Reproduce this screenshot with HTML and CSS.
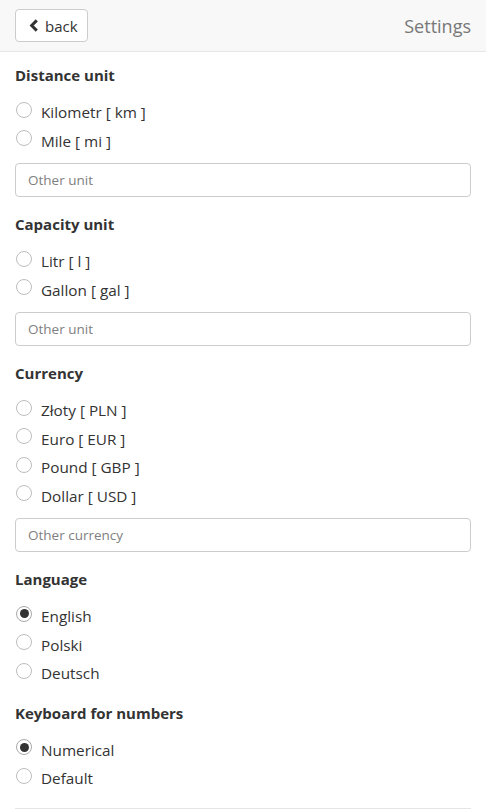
FILE: index.html
```html
<!DOCTYPE html>
<html>
<head>
<meta charset="utf-8">
<link rel="stylesheet" href="styles.css">
</head>
<body>
<header class="topbar">
  <button class="back-btn"><svg class="chev" viewBox="0 0 10 14" width="10" height="13"><path d="M8 1.5 L2.5 7 L8 12.5" fill="none" stroke="#333" stroke-width="3.2"/></svg><span>back</span></button>
  <div class="title">Settings</div>
</header>
<main class="content">
  <section class="group with-field">
    <h3 class="heading">Distance unit</h3>
    <div class="options">
      <label class="opt"><span class="radio"></span>Kilometr [ km ]</label>
      <label class="opt"><span class="radio"></span>Mile [ mi ]</label>
    </div>
    <div class="field">Other unit</div>
  </section>
  <section class="group with-field">
    <h3 class="heading">Capacity unit</h3>
    <div class="options">
      <label class="opt"><span class="radio"></span>Litr [ l ]</label>
      <label class="opt"><span class="radio"></span>Gallon [ gal ]</label>
    </div>
    <div class="field">Other unit</div>
  </section>
  <section class="group with-field">
    <h3 class="heading">Currency</h3>
    <div class="options">
      <label class="opt"><span class="radio"></span>Złoty [ PLN ]</label>
      <label class="opt"><span class="radio"></span>Euro [ EUR ]</label>
      <label class="opt"><span class="radio"></span>Pound [ GBP ]</label>
      <label class="opt"><span class="radio"></span>Dollar [ USD ]</label>
    </div>
    <div class="field">Other currency</div>
  </section>
  <section class="group">
    <h3 class="heading">Language</h3>
    <div class="options">
      <label class="opt"><span class="radio checked"></span>English</label>
      <label class="opt"><span class="radio"></span>Polski</label>
      <label class="opt"><span class="radio"></span>Deutsch</label>
    </div>
  </section>
  <section class="group">
    <h3 class="heading">Keyboard for numbers</h3>
    <div class="options">
      <label class="opt"><span class="radio checked"></span>Numerical</label>
      <label class="opt"><span class="radio"></span>Default</label>
    </div>
  </section>
  <hr class="rule">
</main>
</body>
</html>
```
FILE: styles.css
```css
html, body {
  margin: 0;
  padding: 0;
  background: #fff;
  font-family: "Open Sans", "Noto Sans", sans-serif;
  color: #333;
}
.topbar {
  height: 51px;
  background: #f8f8f8;
  border-bottom: 1px solid #e7e7e7;
  display: flex;
  align-items: center;
  justify-content: space-between;
  padding: 0 15px;
}
.back-btn {
  display: flex;
  align-items: center;
  gap: 6px;
  height: 33px;
  width: 73px;
  padding: 0 8px 0 13px;
  background: #fff;
  border: 1px solid #ccc;
  border-radius: 4px;
  font-family: inherit;
  font-size: 15px;
  color: #333;
  box-sizing: border-box;
}
.chev { display: block; }
.title {
  font-size: 18px;
  color: #777;
}
.content {
  padding: 13px 15px 0;
}
.group {
  display: flex;
  flex-direction: column;
  margin-bottom: 15px;
}
.group.with-field { margin-bottom: 17px; }
.heading {
  margin: 0 0 13px;
  font-size: 15px;
  line-height: 20px;
  font-weight: 700;
}
.options {
  display: flex;
  flex-direction: column;
}
.opt {
  height: 28.5px;
  display: flex;
  align-items: center;
  font-size: 15.3px;
}
.radio {
  width: 16px;
  height: 16px;
  box-sizing: border-box;
  border: 1px solid #bdbdbd;
  border-radius: 50%;
  background: #fff;
  margin: -5px 9px 0 1px;
  position: relative;
}
.radio.checked {
  border-color: #aaa;
}
.radio.checked::after {
  content: "";
  position: absolute;
  left: 2.5px; top: 2.5px;
  width: 9px; height: 9px;
  border-radius: 50%;
  background: #333;
}
.field {
  margin-top: 8px;
  height: 34px;
  border: 1px solid #ccc;
  border-radius: 4px;
  box-sizing: border-box;
  padding: 0 12px;
  display: flex;
  align-items: center;
  font-size: 13.5px;
  color: #808080;
}
.rule {
  margin: 10px 0 0;
  border: 0;
  border-top: 1px solid #e5e5e5;
}
```
